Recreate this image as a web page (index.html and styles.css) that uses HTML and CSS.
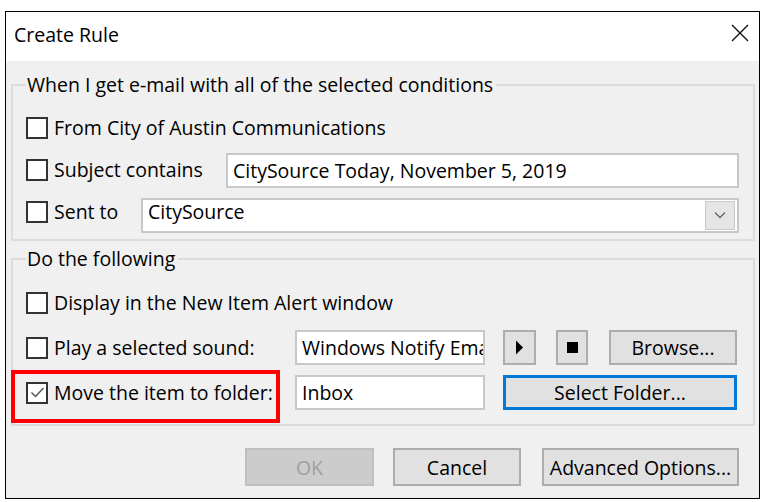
FILE: index.html
```html
<!DOCTYPE html>
<html>
<head>
<meta charset="utf-8">
<link rel="stylesheet" href="styles.css">
</head>
<body>
<div class="dialog">
  <div class="titlebar">
    <span class="title">Create Rule</span>
    <svg class="close" width="18" height="18" viewBox="0 0 18 18"><path d="M1 1 L17 17 M17 1 L1 17" stroke="#111" stroke-width="1.4" fill="none"/></svg>
  </div>
  <div class="content">
    <fieldset class="group g1">
      <legend>When I get e-mail with all of the selected conditions</legend>
      <div class="row r1">
        <span class="cb"></span><span class="lbl">From City of Austin Communications</span>
      </div>
      <div class="row r2">
        <span class="cb"></span><span class="lbl w-subj">Subject contains</span>
        <div class="field grow">CitySource Today, November 5, 2019</div>
      </div>
      <div class="row r3">
        <span class="cb"></span><span class="lbl w-sent">Sent to</span>
        <div class="field combo grow"><span class="combo-text">CitySource</span>
          <span class="dd"><svg width="12" height="8" viewBox="0 0 12 8"><path d="M1 1.5 L6 6.5 L11 1.5" stroke="#666" stroke-width="1.3" fill="none"/></svg></span>
        </div>
      </div>
    </fieldset>
    <fieldset class="group g2">
      <legend>Do the following</legend>
      <div class="row a1">
        <span class="cb"></span><span class="lbl">Display in the New Item Alert window</span>
      </div>
      <div class="row a2">
        <span class="cb"></span><span class="lbl w-act">Play a selected sound:</span>
        <div class="field small clip">Windows Notify Email</div>
        <button class="btn icon-btn play"><svg width="9" height="15" viewBox="0 0 9 15"><path d="M1 0.5 L8 7.5 L1 14.5 Z" fill="#000"/></svg></button>
        <button class="btn icon-btn stop"><svg width="11" height="11" viewBox="0 0 11 11"><rect width="11" height="11" fill="#000"/></svg></button>
        <button class="btn browse">Browse...</button>
      </div>
      <div class="row a3">
        <span class="mark"><span class="cb checked"><svg width="17" height="17" viewBox="0 0 17 17"><path d="M2.5 8.5 L6.5 12.5 L14.5 4" stroke="#555" stroke-width="1.5" fill="none"/></svg></span><span class="lbl w-act">Move the item to folder:</span></span>
        <div class="field small">Inbox</div>
        <button class="btn select">Select Folder...</button>
      </div>
    </fieldset>
    <div class="footer">
      <button class="btn foot disabled">OK</button>
      <button class="btn foot cancel">Cancel</button>
      <button class="btn foot adv">Advanced Options...</button>
    </div>
  </div>
</div>
</body>
</html>
```

FILE: styles.css
```css
*, *::before, *::after { box-sizing: border-box; }
html, body { margin: 0; padding: 0; background: #fff; }
body {
  font-family: "Open Sans", "Noto Sans", sans-serif;
  font-size: 19.5px;
  color: #000;
  padding: 11px 0 0 5px;
}
.dialog {
  width: 755px;
  height: 488px;
  border: 1px solid #000;
  display: flex;
  flex-direction: column;
  background: #f0f0f0;
}
.titlebar {
  height: 49px;
  background: #fff;
  display: flex;
  align-items: flex-start;
  padding: 11px 10px 0 8px;
  justify-content: space-between;
}
.title { line-height: 24px; }
.close { display: block; margin-top: 1px; }
.content {
  flex: 1;
  display: flex;
  flex-direction: column;
  padding: 0 4px 0 5px;
}
.group {
  margin: 0;
  border: 2px solid #dcdcdc;
  padding: 0 14px 0 13px;
  min-width: 0;
}
.group legend {
  padding: 0 3px 0 1px;
  margin-left: 0;
  line-height: 24px;
}
.g1 { margin-top: 12px; height: 168px; }
.g2 { margin-top: 6px; height: 179px; padding-right: 15px; }
.row {
  display: flex;
  align-items: center;
}
.cb {
  flex: none;
  width: 22px;
  height: 22px;
  border: 2px solid #333;
  background: #fff;
  display: flex;
  align-items: center;
  justify-content: center;
}
.lbl {
  flex: none;
  margin-left: 6px;
  white-space: nowrap;
  line-height: 24px;
}
.w-subj { width: 172px; }
.w-sent { width: 87px; }
.w-act { width: 241px; }
.r1 { height: 42px; margin-top: 10px; }
.r2 { height: 42px; }
.r3 { height: 41px; }
.field {
  height: 35px;
  border: 2px solid #c8c8c8;
  background: #fff;
  display: flex;
  align-items: center;
  padding: 0 5px;
  white-space: nowrap;
  overflow: hidden;
}
.grow { flex: 1; }
.r3 .combo { height: 35px; margin-top: 7px; padding-right: 2px; justify-content: space-between; }
.combo-text { margin-top: -7px; }
.dd {
  width: 30px;
  height: 29px;
  background: #e5e5e5;
  border: 1px solid #c8c8c8;
  display: flex;
  align-items: center;
  justify-content: center;
}
.small { width: 190px; flex: none; }
.clip { text-overflow: clip; }
.a1 { height: 45px; margin-top: 9px; }
.a2 { height: 45px; }
.a3 { height: 45px; }
.btn {
  font: inherit;
  color: #000;
  background: #e1e1e1;
  border: 2px solid #adadad;
  padding: 0;
  height: 35px;
  display: flex;
  align-items: center;
  justify-content: center;
  flex: none;
}
.icon-btn { width: 33px; }
.play { margin-left: 18px; }
.stop { margin-left: 20px; width: 32px; }
.browse { margin-left: 21px; width: 128px; }
.select { margin-left: 18px; width: 234px; border: 3px solid #0078d7; }
.mark { position: relative; display: flex; align-items: center; }
.mark::after {
  content: "";
  position: absolute;
  left: -15px;
  top: -11px;
  width: 269px;
  height: 53px;
  border: 4px solid #ff0000;
}
.footer {
  display: flex;
  justify-content: flex-end;
  padding: 22px 16px 0 0;
}
.foot { height: 38px; }
.disabled { width: 129px; background: #cccccc; border-color: #bfbfbf; color: #a0a0a0; }
.cancel { width: 128px; margin-left: 19px; }
.adv { width: 197px; margin-left: 21px; }
```
